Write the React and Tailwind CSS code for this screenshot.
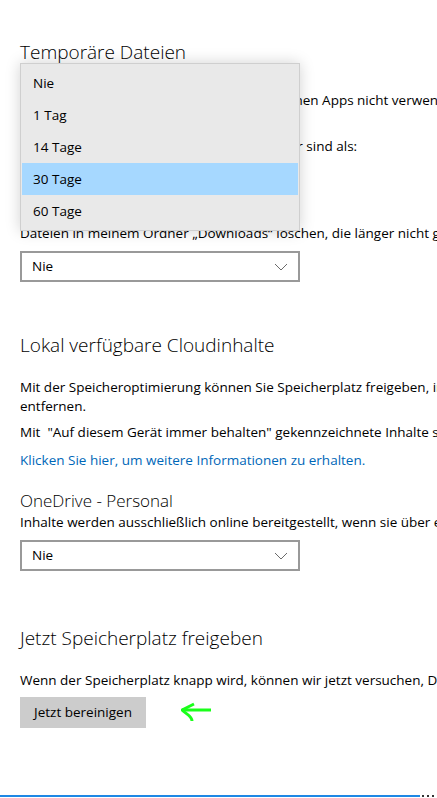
import React from 'react';

const font = { fontFamily: '"Open Sans", "Noto Sans", sans-serif' };

const Chevron = () => (
  <svg width="14" height="8" viewBox="0 0 14 8" fill="none">
    <path d="M1 1l6 6 6-6" stroke="#6b6b6b" strokeWidth="1" />
  </svg>
);

const Select = ({ value }) => (
  <div className="w-[280px] h-[31px] border-2 border-[#999999] flex items-center justify-between pl-[10px] pr-[10px] text-[13.5px] text-black">
    <span>{value}</span>
    <Chevron />
  </div>
);

const Popup = () => {
  const items = ['Nie', '1 Tag', '14 Tage', '30 Tage', '60 Tage'];
  return (
    <div className="absolute left-[20px] top-[63px] w-[280px] border border-[#cfcfcf] bg-[#e9e9e9] shadow-[0_0_14px_rgba(0,0,0,0.18)] py-[3px]">
      {items.map((it) => (
        <div
          key={it}
          className={`h-[32px] flex items-center px-[11px] mx-px text-[13.5px] text-black ${
            it === '30 Tage' ? 'bg-[#a6d8ff]' : ''
          }`}
        >
          {it}
        </div>
      ))}
    </div>
  );
};

const GreenArrow = () => (
  <svg width="32" height="24" viewBox="0 0 32 24" fill="none">
    <path d="M1 8h29" stroke="#1aff1a" strokeWidth="3" />
    <path d="M13 2L1 8c4 4 10 6 10 11" stroke="#1aff1a" strokeWidth="3" fill="none" strokeLinejoin="round" />
  </svg>
);

export default function App() {
  return (
    <div className="relative w-[437px] h-[798px] bg-white overflow-hidden flex flex-col" style={font}>
      <div className="px-[20px] whitespace-nowrap text-[13.5px] leading-[19px] text-black">
        {/* Temporäre Dateien */}
        <h2 className="pt-[38px] text-[19px] leading-[28px] font-light">Temporäre Dateien</h2>
        <div className="mt-[24px] flex items-center gap-[20px] h-[20px]">
          <div className="w-[20px] h-[20px] bg-[#0078d7]" />
          <span>Temporäre Dateien löschen, die von meinen Apps nicht verwendet werden</span>
        </div>
        <p className="mt-[27px]">Inhalte im Papierkorb löschen, wenn sie älter sind als:</p>
        <div className="mt-[8px]">
          <Select value="30 Tage" />
        </div>
        <p className="mt-[29px]">Dateien in meinem Ordner „Downloads“ löschen, die länger nicht geöffnet wurden:</p>
        <div className="mt-[8px]">
          <Select value="Nie" />
        </div>

        {/* Lokal verfügbare Cloudinhalte */}
        <h2 className="mt-[49px] text-[19px] leading-[28px] font-light">Lokal verfügbare Cloudinhalte</h2>
        <p className="mt-[19px]">
          Mit der Speicheroptimierung können Sie Speicherplatz freigeben, indem Sie nicht verwendete Cloudinhalte
          <br />
          entfernen.
        </p>
        <p className="mt-[7px]">Mit &nbsp;"Auf diesem Gerät immer behalten" gekennzeichnete Inhalte sind nicht betroffen.</p>
        <p className="mt-[9px] text-[#0067b8]">Klicken Sie hier, um weitere Informationen zu erhalten.</p>
        <h3 className="mt-[19px] text-[17px] leading-[24px] font-light">OneDrive - Personal</h3>
        <p>Inhalte werden ausschließlich online bereitgestellt, wenn sie über einen längeren Zeitraum nicht geöffnet wurden:</p>
        <div className="mt-[8px]">
          <Select value="Nie" />
        </div>

        {/* Jetzt Speicherplatz freigeben */}
        <h2 className="mt-[53px] text-[19px] leading-[28px] font-light">Jetzt Speicherplatz freigeben</h2>
        <p className="mt-[19px]">Wenn der Speicherplatz knapp wird, können wir jetzt versuchen, Dateien zu bereinigen.</p>
        <div className="mt-[7px] flex items-start gap-[35px]">
          <button className="w-[126px] h-[31px] bg-[#cccccc] text-[13.5px] text-black">Jetzt bereinigen</button>
          <div className="mt-[5px]">
            <GreenArrow />
          </div>
        </div>
      </div>

      <div className="mt-auto mb-px flex items-center h-[2px]">
        <div className="flex-1 h-[2px] bg-[#1e88e5]" />
        <div className="w-[17px] flex gap-[3px] pl-[2px]">
          <div className="w-[2px] h-[2px] bg-[#333]" />
          <div className="w-[2px] h-[2px] bg-[#333]" />
          <div className="w-[2px] h-[2px] bg-[#333]" />
        </div>
      </div>

      <Popup />
    </div>
  );
}
